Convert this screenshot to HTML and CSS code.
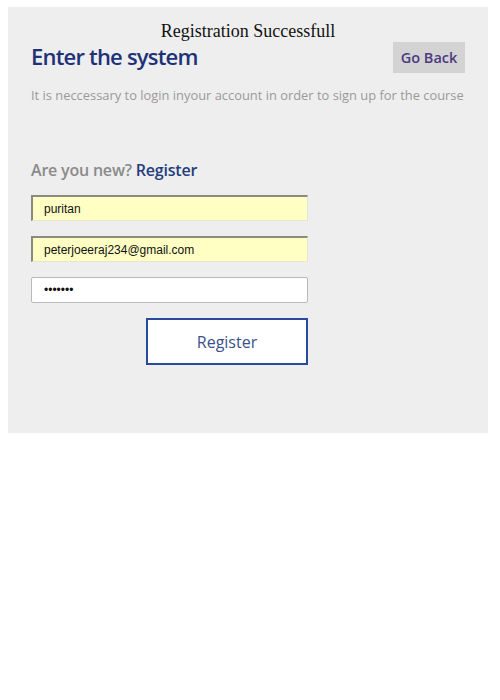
FILE: index.html
```html
<!DOCTYPE html>
<html>
<head>
<meta charset="utf-8">
<link rel="stylesheet" href="styles.css">
</head>
<body>
<div class="panel">
  <h3 class="status">Registration Successfull</h3>
  <div class="head-row">
    <h1 class="title">Enter the system</h1>
    <button class="back">Go Back</button>
  </div>
  <p class="note">It is neccessary to login inyour account in order to sign up for the course</p>
  <h2 class="prompt">Are you new? <span class="accent">Register</span></h2>
  <form class="form">
    <input class="field filled" type="text" value="puritan">
    <input class="field filled" type="email" value="peterjoeeraj234@gmail.com">
    <input class="field" type="password" value="1234567">
    <div class="actions">
      <button class="submit" type="button">Register</button>
    </div>
  </form>
</div>
</body>
</html>
```

FILE: styles.css
```css
html, body {
  margin: 0;
  padding: 0;
  background: #ffffff;
}
body {
  padding: 7px 12px 0 8px;
}
.panel {
  width: 480px;
  height: 426px;
  box-sizing: border-box;
  background: #eeeeee;
  padding: 14px 23px 0 23px;
  font-family: "Open Sans", sans-serif;
}
.status {
  margin: 0;
  font-family: "Liberation Serif", serif;
  font-weight: normal;
  font-size: 18px;
  line-height: 20px;
  text-align: center;
  color: #111111;
}
.head-row {
  display: flex;
  justify-content: space-between;
  align-items: center;
  margin-top: 1px;
}
.title {
  margin: -4px 0 0 0;
  font-size: 22px;
  font-weight: 600;
  letter-spacing: -0.8px;
  color: #1d3277;
  line-height: 30px;
}
.back {
  border: none;
  background: #d3d3d3;
  color: #4b3a80;
  font-family: "Open Sans", sans-serif;
  font-weight: 600;
  font-size: 14.5px;
  width: 72px;
  height: 31px;
  padding: 0;
  margin-right: 0;
}
.note {
  margin: 13px 0 0 0;
  font-size: 12.9px;
  color: #9a9a9a;
  line-height: 18px;
  white-space: nowrap;
}
.prompt {
  margin: 55px 0 0 0;
  font-size: 16px;
  font-weight: 600;
  letter-spacing: -0.2px;
  color: #8a8a8a;
  line-height: 22px;
}
.accent {
  color: #253d7c;
}
.form {
  margin-top: 14px;
  display: flex;
  flex-direction: column;
  width: 277px;
}
.field {
  box-sizing: border-box;
  width: 277px;
  height: 26px;
  margin: 0 0 15px 0;
  padding: 0 12px;
  font-family: "Liberation Sans", Arial, sans-serif;
  font-size: 12px;
  color: #111111;
  background: #ffffff;
  border: 1px solid #b9b9b9;
  border-radius: 2px;
  outline: none;
}
.field.filled {
  background: #ffffc4;
  border-style: solid;
  border-width: 2px 1px 1px 2px;
  border-color: #8a8a80 #e6e6d0 #e6e6d0 #8a8a80;
  border-radius: 0;
  padding-left: 11px;
}
.actions {
  display: flex;
  justify-content: flex-end;
  margin-top: 0;
}
.submit {
  box-sizing: border-box;
  width: 162px;
  height: 47px;
  background: #ffffff;
  border: 2px solid #2a4a9e;
  color: #3a4f8c;
  font-family: "Open Sans", sans-serif;
  font-size: 16px;
  cursor: pointer;
}
```
